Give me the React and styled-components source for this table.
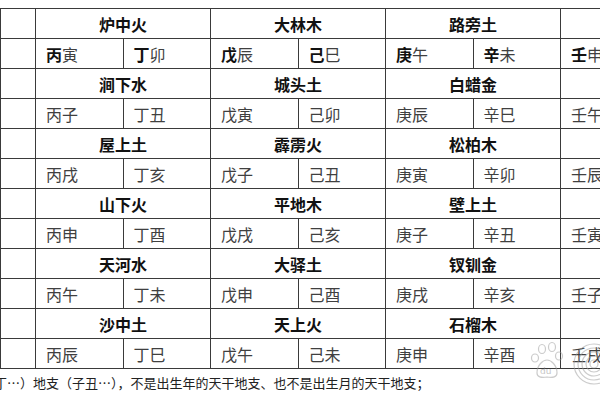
import React from "react";
import styled, { createGlobalStyle } from "styled-components";

const Global = createGlobalStyle`
  html, body { margin: 0; padding: 0; background: #fff; overflow: hidden; }
  body { width: 600px; height: 400px; font-family: "Noto Sans CJK SC", "Noto Sans", sans-serif; }
`;

const Page = styled.div`
  position: relative;
  width: 600px;
  height: 400px;
  overflow: hidden;
  padding-top: 8px;
  box-sizing: border-box;
`;

const Table = styled.table`
  border-collapse: collapse;
  table-layout: fixed;
  width: 735px;
  font-family: "Noto Sans CJK SC", sans-serif;
`;

const Row = styled.tr`
  height: 30px;
`;

const Cell = styled.td`
  border: 1px solid #3a3a3a;
  padding: 0 0 0 ${(p) => (p.$head ? 0 : 10)}px;
  text-align: ${(p) => (p.$head ? "center" : "left")};
  font-size: 16px;
  line-height: 20px;
  font-weight: ${(p) => (p.$head ? 700 : 400)};
  color: ${(p) => (p.$head ? "#111" : "#404040")};
  white-space: nowrap;
  overflow: hidden;
`;

const Stem = styled.span`
  font-weight: ${(p) => (p.$bold ? 700 : 400)};
  color: ${(p) => (p.$bold ? "#111" : "#404040")};
`;

const Note = styled.p`
  margin: 5px 0 0 -6px;
  font-size: 13px;
  line-height: 17px;
  color: #222;
  white-space: nowrap;
`;

const Mark = styled.svg`
  position: absolute;
  right: 0;
  bottom: 12px;
  opacity: 0.5;
`;

const rows = [
  { names: ["炉中火", "大林木", "路旁土", ""], br: ["寅", "卯", "辰", "巳", "午", "未", "申"], bold: true },
  { names: ["涧下水", "城头土", "白蜡金", ""], br: ["子", "丑", "寅", "卯", "辰", "巳", "午"] },
  { names: ["屋上土", "霹雳火", "松柏木", ""], br: ["戌", "亥", "子", "丑", "寅", "卯", "辰"] },
  { names: ["山下火", "平地木", "壁上土", ""], br: ["申", "酉", "戌", "亥", "子", "丑", "寅"] },
  { names: ["天河水", "大驿土", "钗钏金", ""], br: ["午", "未", "申", "酉", "戌", "亥", "子"] },
  { names: ["沙中土", "天上火", "石榴木", ""], br: ["辰", "巳", "午", "未", "申", "酉", "戌"] },
];

const stems = ["丙", "丁", "戊", "己", "庚", "辛", "壬"];
const widths = [35, 87.5, 87.5, 87.5, 87.5, 87.5, 87.5, 87.5, 87.5];

export default function App() {
  return (
    <>
      <Global />
      <Page>
        <Table>
          <colgroup>
            {widths.map((w, i) => (
              <col key={i} style={{ width: w }} />
            ))}
          </colgroup>
          <tbody>
            {rows.map((r, ri) => (
              <React.Fragment key={ri}>
                <Row>
                  <Cell $head />
                  {r.names.map((n, i) => (
                    <Cell $head key={i} colSpan={2}>
                      {n}
                    </Cell>
                  ))}
                </Row>
                <Row>
                  <Cell />
                  {stems.map((s, i) => (
                    <Cell key={i}>
                      <Stem $bold={r.bold}>{s}</Stem>
                      {r.br[i]}
                    </Cell>
                  ))}
                  <Cell />
                </Row>
              </React.Fragment>
            ))}
          </tbody>
        </Table>
        <Note>丁…）地支（子丑…），不是出生年的天干地支、也不是出生月的天干地支；</Note>
        <Mark width="80" height="50" viewBox="0 0 80 50">
          <g fill="none" stroke="#9a9a9a" strokeWidth="1.2">
            <ellipse cx="22" cy="11" rx="3.5" ry="4.5" />
            <ellipse cx="32" cy="9" rx="3.5" ry="4.5" />
            <ellipse cx="15" cy="20" rx="3.5" ry="4" />
            <ellipse cx="39" cy="18" rx="3.5" ry="4" />
            <path d="M17 35 C17 27 23 22 27 22 C31 22 37 27 37 35 C37 39 33 40 27 39 C21 40 17 39 17 35 Z" />
            <circle cx="74" cy="26" r="4" />
            <circle cx="74" cy="26" r="8" />
            <circle cx="74" cy="26" r="12" />
            <circle cx="74" cy="26" r="16" />
            <circle cx="74" cy="26" r="20" />
          </g>
          <text x="20" y="36" fontSize="9" fill="#8a8a8a" fontFamily="DejaVu Sans, sans-serif">du</text>
        </Mark>
      </Page>
    </>
  );
}
